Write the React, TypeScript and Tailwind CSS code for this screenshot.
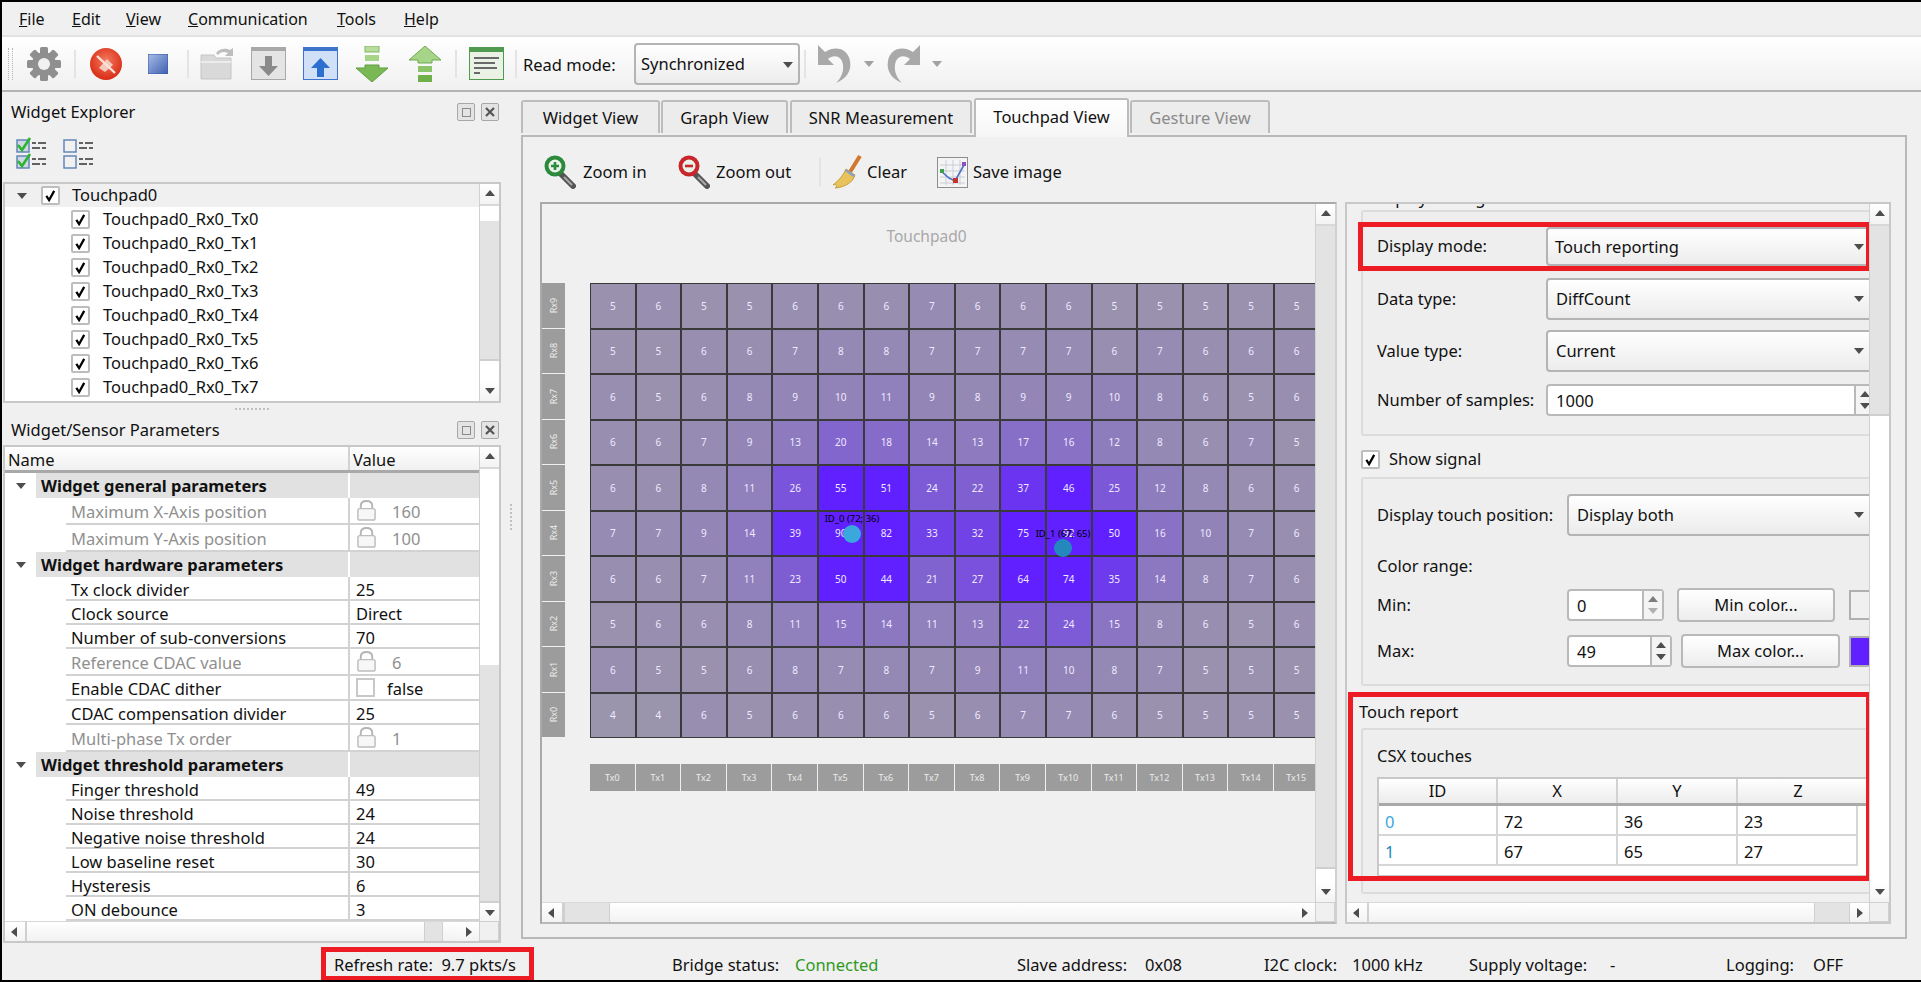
import type { ReactNode } from 'react';

const gridValues = [
  [5, 6, 5, 5, 6, 6, 6, 7, 6, 6, 6, 5, 5, 5, 5, 5],
  [5, 5, 6, 6, 7, 8, 8, 7, 7, 7, 7, 6, 7, 6, 6, 6],
  [6, 5, 6, 8, 9, 10, 11, 9, 8, 9, 9, 10, 8, 6, 5, 6],
  [6, 6, 7, 9, 13, 20, 18, 14, 13, 17, 16, 12, 8, 6, 7, 5],
  [6, 6, 8, 11, 26, 55, 51, 24, 22, 37, 46, 25, 12, 8, 6, 6],
  [7, 7, 9, 14, 39, 90, 82, 33, 32, 75, 92, 50, 16, 10, 7, 6],
  [6, 6, 7, 11, 23, 50, 44, 21, 27, 64, 74, 35, 14, 8, 7, 6],
  [5, 6, 6, 8, 11, 15, 14, 11, 13, 22, 24, 15, 8, 6, 5, 6],
  [6, 5, 5, 6, 8, 7, 8, 7, 9, 11, 10, 8, 7, 5, 5, 5],
  [4, 4, 6, 5, 6, 6, 6, 5, 6, 7, 7, 6, 5, 5, 5, 5],
];

function cellColor(v: number) {
  const t = Math.min(Math.max(v - 4, 0) / 40, 1);
  const r = Math.round(154 + (96 - 154) * t);
  const g = Math.round(148 + (32 - 148) * t);
  const b = Math.round(172 + (255 - 172) * t);
  return `rgb(${r},${g},${b})`;
}

function Check({ className = 'w-[13px] h-[13px]' }: { className?: string }) {
  return (
    <svg viewBox="0 0 14 14" className={className}>
      <path d="M2.5 7.5 L5.5 12 L11 2" fill="none" stroke="#000" strokeWidth="2.4" />
    </svg>
  );
}

function CheckBox({ checked = true }: { checked?: boolean }) {
  return (
    <span className="w-[19px] h-[19px] shrink-0 bg-white border-2 border-[#bdbdbd] rounded-[2px] flex items-center justify-center">
      {checked && <Check />}
    </span>
  );
}

function Tri({ dir, className = '' }: { dir: 'up' | 'down' | 'left' | 'right'; className?: string }) {
  const d = {
    up: 'M1 8 L6 2 L11 8 Z',
    down: 'M1 3 L11 3 L6 9 Z',
    left: 'M8 1 L8 11 L2 6 Z',
    right: 'M3 1 L3 11 L9 6 Z',
  }[dir];
  return (
    <svg viewBox="0 0 12 12" className={`w-[12px] h-[12px] shrink-0 ${className}`}>
      <path d={d} fill="#4d4d4d" />
    </svg>
  );
}

function ScrollArrow({ dir }: { dir: 'up' | 'down' | 'left' | 'right' }) {
  const box = dir === 'up' || dir === 'down' ? 'h-[20px] w-full' : 'w-[20px] h-full';
  return (
    <div className={`${box} shrink-0 bg-gradient-to-b from-white to-[#f3f3f3] flex items-center justify-center`}>
      <Tri dir={dir} />
    </div>
  );
}

function VScroll({ before, thumb }: { before: string; thumb: string }) {
  return (
    <div className="w-[20px] shrink-0 flex flex-col bg-white border-l border-[#d0d0d0]">
      <ScrollArrow dir="up" />
      <div className={`${before} shrink-0 bg-white border-t-2 border-[#d8d8d8]`} />
      <div className={`${thumb} shrink-0 bg-[#e3e3e3] border-b-2 border-[#cfcfcf]`} />
      <div className="flex-1 bg-white" />
      <ScrollArrow dir="down" />
    </div>
  );
}

function HScroll({ before, thumb }: { before: string; thumb: string }) {
  return (
    <div className="h-[20px] shrink-0 flex">
      <div className="flex-1 flex bg-gradient-to-b from-white to-[#f2f2f2] border-t border-[#d8d8d8] min-w-0">
        <ScrollArrow dir="left" />
        <div className={`${before} shrink-0 border-l-2 border-[#d0d0d0]`} />
        <div className={`${thumb} shrink-0 bg-[#e3e3e3] border-x border-[#cfcfcf]`} />
        <div className="flex-1" />
        <ScrollArrow dir="right" />
      </div>
      <div className="w-[20px] shrink-0 bg-[#f0f0f0] border border-[#d0d0d0]" />
    </div>
  );
}

function Sep({ className }: { className: string }) {
  return <div className={`w-[2px] h-[28px] bg-[#e4e4e4] shrink-0 ${className}`} />;
}

function Combo({ text, className, arrow = 'mr-[4px]' }: { text: string; className: string; arrow?: string }) {
  return (
    <div className={`shrink-0 flex items-center border-2 border-[#b4b4b4] rounded-[4px] bg-gradient-to-b from-white to-[#ececec] ${className}`}>
      <span className="flex-1">{text}</span>
      <Tri dir="down" className={arrow} />
    </div>
  );
}

function Spin({ text, className, dim = false }: { text: string; className: string; dim?: boolean }) {
  return (
    <div className={`shrink-0 flex items-center pl-[8px] border-2 border-[#b9b9b9] rounded-[4px] bg-white ${className}`}>
      <span className="flex-1 pt-[2px]">{text}</span>
      <div className="w-[20px] self-stretch border-l-2 border-[#b9b9b9] flex flex-col items-center justify-center bg-[#f4f4f4]">
        <Tri dir="up" className={dim ? 'opacity-70 -mb-[1px]' : '-mb-[1px]'} />
        <Tri dir="down" className={dim ? 'opacity-40' : ''} />
      </div>
    </div>
  );
}

function Btn({ text, className }: { text: string; className: string }) {
  return (
    <div className={`shrink-0 flex items-center justify-center border-2 border-[#b9b9b9] rounded-[4px] bg-gradient-to-b from-white to-[#ededed] ${className}`}>
      {text}
    </div>
  );
}

/* toolbar drawings */
function Gear() {
  const teeth = [0, 45, 90, 135, 180, 225, 270, 315];
  return (
    <svg viewBox="0 0 34 34" className="w-[34px] h-[34px] ml-[14px] shrink-0">
      {teeth.map((a) => (
        <rect key={a} x="13" y="0" width="8" height="9" rx="1.5" fill="#8f8f8f" transform={`rotate(${a} 17 17)`} />
      ))}
      <circle cx="17" cy="17" r="12" fill="#8f8f8f" />
      <circle cx="17" cy="17" r="6" fill="#f1f1f1" />
    </svg>
  );
}

function StopConn() {
  return (
    <svg viewBox="0 0 32 32" className="w-[32px] h-[32px] ml-[14px] shrink-0">
      <defs>
        <radialGradient id="rd" cx="50%" cy="40%" r="60%">
          <stop offset="0%" stopColor="#f27a5c" />
          <stop offset="100%" stopColor="#d92a14" />
        </radialGradient>
      </defs>
      <circle cx="16" cy="16" r="16" fill="url(#rd)" />
      <path d="M9 20 L17 11 L23 17 L15 24 Z" fill="#f4c9bd" />
      <path d="M7 8 L25 25" stroke="#f9e3dc" strokeWidth="2.4" />
    </svg>
  );
}

function Square() {
  return (
    <svg viewBox="0 0 20 20" className="w-[20px] h-[20px] ml-[26px] shrink-0">
      <defs>
        <linearGradient id="bl" x1="0" y1="0" x2="1" y2="1">
          <stop offset="0%" stopColor="#a9bde6" />
          <stop offset="100%" stopColor="#3d5fb0" />
        </linearGradient>
      </defs>
      <rect width="20" height="20" fill="url(#bl)" stroke="#3a5aa8" />
    </svg>
  );
}

function Folder() {
  return (
    <svg viewBox="0 0 34 33" className="w-[34px] h-[33px] ml-[11px] shrink-0">
      <path d="M1 8 L14 8 L16 11 L31 11 L31 32 L1 32 Z" fill="#d9d9d9" stroke="#c6c6c6" />
      <path d="M16 6 C20 1 26 1 30 3 L33 1 L33 9 L25 9 L28 6 C24 4 20 5 18 8 Z" fill="#bdbdbd" />
      <path d="M1 15 L31 15" stroke="#ececec" strokeWidth="2" />
    </svg>
  );
}

function WinArrow({ up, className }: { up?: boolean; className: string }) {
  const frame = up ? '#3f74cc' : '#a8a8a8';
  const fill = up ? '#cfe0f7' : '#e4e4e4';
  const arrow = up ? '#2c6fd0' : '#8a8a8a';
  return (
    <svg viewBox="0 0 35 33" className={`w-[35px] h-[33px] shrink-0 ${className}`}>
      <rect x="0.5" y="0.5" width="34" height="32" fill={fill} stroke={frame} />
      <rect x="0" y="0" width="35" height="4" fill={frame} />
      {up ? (
        <path d="M17.5 11 L27 21 L21 21 L21 30 L14 30 L14 21 L8 21 Z" fill={arrow} />
      ) : (
        <path d="M14 9 L21 9 L21 19 L27 19 L17.5 29 L8 19 L14 19 Z" fill={arrow} />
      )}
    </svg>
  );
}

function GreenArrow({ up, className }: { up?: boolean; className: string }) {
  return (
    <svg viewBox="0 0 32 36" className={`w-[32px] h-[36px] shrink-0 ${className}`}>
      {up ? (
        <>
          <path d="M16 0 L32 14 L23 14 L23 17 L9 17 L9 14 L0 14 Z" fill="#a6d488" stroke="#6da94c" />
          <rect x="9" y="20" width="14" height="6" fill="#8cc46a" />
          <rect x="9" y="29" width="14" height="7" fill="#6fb04a" />
        </>
      ) : (
        <>
          <rect x="9" y="0" width="14" height="6" fill="#b7dc9c" stroke="#84b864" />
          <rect x="9" y="9" width="14" height="6" fill="#a6d488" />
          <path d="M9 19 L23 19 L23 22 L32 22 L16 36 L0 22 L9 22 Z" fill="#7ab856" stroke="#5f9c3e" />
        </>
      )}
    </svg>
  );
}

function LogWin() {
  return (
    <svg viewBox="0 0 35 33" className="w-[35px] h-[33px] ml-[12px] shrink-0">
      <rect x="0.5" y="0.5" width="34" height="32" fill="#e9f2e4" stroke="#4f9a4f" />
      <rect width="35" height="5" fill="#4f9a4f" />
      <path d="M5 11 H30 M5 16 H26 M5 21 H28 M5 26 H11" stroke="#6a6a6a" strokeWidth="2" />
    </svg>
  );
}

function Undo({ flip, className }: { flip?: boolean; className: string }) {
  return (
    <svg viewBox="0 0 36 42" className={`w-[36px] h-[42px] shrink-0 ${className} ${flip ? '-scale-x-100' : ''}`}>
      <path d="M2 2 L2 22 L18 22 L12 16 C18 11 26 13 27 22 C28 30 24 36 20 40 C30 36 36 28 34 18 C32 6 20 2 9 9 Z" fill="#a9a9a9" />
    </svg>
  );
}

function Magnifier({ color, plus }: { color: string; plus?: boolean }) {
  return (
    <svg viewBox="0 0 32 34" className="w-[32px] h-[34px] shrink-0">
      <path d="M16 18 L29 31" stroke="#555" strokeWidth="6" strokeLinecap="round" />
      <path d="M20 22 L28 30" stroke="#aaa" strokeWidth="2" />
      <circle cx="11" cy="11" r="10.5" fill={color} />
      <circle cx="11" cy="11" r="6.5" fill="#eaf3ea" />
      {plus ? <path d="M11 7 V15 M7 11 H15" stroke={color} strokeWidth="2.6" /> : <path d="M7 11 H15" stroke={color} strokeWidth="2.6" />}
    </svg>
  );
}

function Broom() {
  return (
    <svg viewBox="0 0 30 34" className="w-[30px] h-[34px] shrink-0">
      <path d="M28 1 L18 17" stroke="#d2772e" strokeWidth="4" />
      <path d="M14 14 L23 20 C21 27 14 32 3 33 C7 30 3 29 1 30 C6 26 11 21 14 14 Z" fill="#e8c25a" stroke="#c79f3c" />
      <path d="M14 14 L23 20 L21 22 L13 16 Z" fill="#8aa2c8" />
    </svg>
  );
}

function ChartIcon() {
  return (
    <svg viewBox="0 0 31 31" className="w-[31px] h-[31px] shrink-0">
      <rect x="0.5" y="0.5" width="30" height="30" fill="#f4f4f4" stroke="#8d8d8d" />
      <path d="M3 8 H28 M3 14 H28 M3 20 H28 M3 26 H28 M9 3 V28 M16 3 V28 M23 3 V28" stroke="#c8cdd6" />
      <path d="M4 14 L12 21 L18 24 L27 8" stroke="#4a72c4" strokeWidth="1.6" fill="none" />
      <rect x="16" y="21" width="5" height="5" fill="#c8322c" />
      <rect x="25" y="5" width="4" height="4" fill="#8f4fc0" />
      <rect x="3" y="12" width="4" height="4" fill="#3aa04a" />
    </svg>
  );
}

function Lock() {
  return (
    <svg viewBox="0 0 22 22" className="w-[21px] h-[21px] shrink-0">
      <path d="M5 10 V6 C5 2 8 1 11 1 C14 1 17 2 17 6 V10" fill="none" stroke="#b5b5b5" strokeWidth="2" />
      <rect x="2" y="9" width="18" height="12" rx="2" fill="#f7f7f7" stroke="#bdbdbd" strokeWidth="1.5" />
    </svg>
  );
}

function DockButtons() {
  return (
    <div className="flex gap-[6px] ml-auto mr-[2px]">
      <span className="w-[18px] h-[18px] border border-[#a8a8a8] rounded-[2px] bg-[#e4e4e4] flex items-center justify-center">
        <span className="w-[9px] h-[9px] border border-[#8a8a8a]" />
      </span>
      <span className="w-[18px] h-[18px] border border-[#a8a8a8] rounded-[2px] bg-[#e4e4e4] flex items-center justify-center text-[#555]">
        <svg viewBox="0 0 10 10" className="w-[10px] h-[10px]">
          <path d="M1 1 L9 9 M9 1 L1 9" stroke="#555" strokeWidth="2.2" />
        </svg>
      </span>
    </div>
  );
}

function ListIcon({ checked }: { checked: boolean }) {
  const rows = [0, 16];
  return (
    <svg viewBox="0 0 32 32" className="w-[32px] h-[32px] shrink-0">
      {rows.map((y) => (
        <g key={y} transform={`translate(0 ${y})`}>
          <rect x="1" y="3" width="12" height="12" fill={checked ? '#cfd8e6' : 'none'} stroke="#5a7fb5" strokeWidth="1.4" />
          {checked && <path d="M2 8 L6 13 L14 1" fill="none" stroke="#2cb52c" strokeWidth="2.6" />}
          <path d="M16 6 H20 M22 6 H30 M16 11 H24 M26 11 H30" stroke="#333" strokeWidth="1.5" />
        </g>
      ))}
    </svg>
  );
}

function ParamGroup({ label }: { label: string }) {
  return (
    <div className="h-[25px] flex items-center">
      <div className="w-[31px] shrink-0 flex justify-center pl-[1px]">
        <Tri dir="down" />
      </div>
      <div className="w-[314px] h-full bg-[#e1e1e1] font-bold pl-[5px] pt-[2px] flex items-center border-r-2 border-white">{label}</div>
      <div className="flex-1 h-full bg-[#e1e1e1]" />
    </div>
  );
}

function ParamRow({ label, value, locked, check }: { label: string; value: string; locked?: boolean; check?: boolean }) {
  const h = locked ? 'h-[27px]' : check ? 'h-[25px]' : 'h-[24px]';
  return (
    <div className={`${h} flex pl-[61px]`}>
      <div className={`w-[284px] border-b-2 border-r-2 border-[#d2d2d2] pl-[5px] pt-[4px] flex items-center ${locked ? 'text-[#8f8f8f]' : ''}`}>{label}</div>
      <div className={`flex-1 border-b-2 border-[#d2d2d2] pl-[6px] flex items-center ${locked ? 'text-[#8f8f8f]' : ''}`}>
        {locked && <span className="mr-[15px]"><Lock /></span>}
        {check && <span className="w-[19px] h-[19px] border-2 border-[#c8c8c8] mr-[12px]" />}
        <span className="pt-[4px]">{value}</span>
      </div>
    </div>
  );
}

const RedFrame = ({ className }: { className: string }) => (
  <div className={`absolute border-[5px] border-[#ed1c24] pointer-events-none ${className}`} />
);

function GroupBox({ children, className }: { children: ReactNode; className: string }) {
  return <div className={`ml-[14px] w-[620px] border-2 border-[#dcdcdc] rounded-[3px] bg-[#eeeeee] ${className}`}>{children}</div>;
}

export default function App() {
  const tree = [0, 1, 2, 3, 4, 5, 6, 7];
  return (
    <div className="w-[1921px] h-[982px] flex flex-col bg-[#f0f0f0] text-[16.5px] leading-none text-[#111] font-['Noto_Sans',sans-serif] border-t-2 border-l-2 border-b-2 border-black overflow-hidden">
      {/* menu */}
      <div className="h-[33px] shrink-0 flex items-center pl-[17px] text-[16px]">
        <span className="w-[53px]"><span className="underline">F</span>ile</span>
        <span className="w-[54px]"><span className="underline">E</span>dit</span>
        <span className="w-[62px]"><span className="underline">V</span>iew</span>
        <span className="w-[149px]"><span className="underline">C</span>ommunication</span>
        <span className="w-[67px]"><span className="underline">T</span>ools</span>
        <span><span className="underline">H</span>elp</span>
      </div>

      {/* toolbar */}
      <div className="h-[57px] shrink-0 flex items-center border-y-2 border-t-[#e2e2e2] border-b-[#b4b4b4] bg-gradient-to-b from-white to-[#f0f0f0]">
        <div className="ml-[6px] w-[5px] h-[32px] shrink-0 border-x border-dotted border-[#b5b5b5]" />
        <Gear />
        <Sep className="ml-[13px]" />
        <StopConn />
        <Square />
        <Sep className="ml-[19px]" />
        <Folder />
        <WinArrow className="ml-[17px]" />
        <WinArrow up className="ml-[17px]" />
        <GreenArrow className="ml-[18px]" />
        <GreenArrow up className="ml-[21px]" />
        <Sep className="ml-[14px]" />
        <LogWin />
        <Sep className="ml-[11px]" />
        <span className="ml-[6px] pt-[4px] w-[111px] shrink-0">Read mode:</span>
        <Combo text="Synchronized" className="w-[166px] h-[42px] pl-[5px] pt-[2px]" />
        <Sep className="ml-[4px]" />
        <Undo className="ml-[10px]" />
        <Tri dir="down" className="ml-[11px] opacity-50" />
        <Undo flip className="ml-[11px]" />
        <Tri dir="down" className="ml-[9px] opacity-50" />
      </div>

      {/* main */}
      <div className="flex-1 min-h-0 flex">
        {/* left docks */}
        <div className="w-[499px] shrink-0 flex flex-col pl-[1px]">
          <div className="h-[40px] shrink-0 flex items-center pl-[8px]">
            Widget Explorer
            <DockButtons />
          </div>
          <div className="h-[50px] shrink-0 flex items-start gap-[15px] pl-[13px] pt-[5px]">
            <ListIcon checked />
            <ListIcon checked={false} />
          </div>
          <div className="h-[221px] shrink-0 flex border-2 border-[#c8c8c8] bg-white overflow-hidden">
            <div className="flex-1 overflow-hidden">
              <div className="h-[23px] bg-[#f0f0f0] flex items-center pl-[11px]">
                <Tri dir="down" />
                <span className="ml-[13px] mr-[12px]"><CheckBox /></span>
                Touchpad0
              </div>
              {tree.map((i) => (
                <div key={i} className="h-[24px] flex items-center pl-[66px] gap-[13px]">
                  <CheckBox />
                  Touchpad0_Rx0_Tx{i}
                </div>
              ))}
              <div className="h-[24px] flex items-center pl-[66px]">
                <CheckBox />
              </div>
            </div>
            <VScroll before="h-[17px]" thumb="h-[140px]" />
          </div>
          <div className="h-[12px] shrink-0 flex justify-center items-center">
            <div className="w-[34px] border-t-2 border-dotted border-[#c0c0c0]" />
          </div>
          <div className="h-[30px] shrink-0 flex items-center pl-[8px]">
            Widget/Sensor Parameters
            <DockButtons />
          </div>
          <div className="h-[498px] shrink-0 flex flex-col border-2 border-[#c8c8c8] bg-white">
            <div className="flex-1 flex min-h-0">
              <div className="flex-1 min-w-0 overflow-hidden">
                <div className="h-[26px] flex bg-gradient-to-b from-white to-[#f0f0f0] border-b-[3px] border-[#a9a9a9]">
                  <div className="w-[345px] pl-[3px] pt-[3px] flex items-center border-r-2 border-[#d2d2d2]">Name</div>
                  <div className="flex-1 pl-[3px] pt-[3px] flex items-center">Value</div>
                </div>
                <ParamGroup label="Widget general parameters" />
                <ParamRow locked label="Maximum X-Axis position" value="160" />
                <ParamRow locked label="Maximum Y-Axis position" value="100" />
                <ParamGroup label="Widget hardware parameters" />
                <ParamRow label="Tx clock divider" value="25" />
                <ParamRow label="Clock source" value="Direct" />
                <ParamRow label="Number of sub-conversions" value="70" />
                <ParamRow locked label="Reference CDAC value" value="6" />
                <ParamRow check label="Enable CDAC dither" value="false" />
                <ParamRow label="CDAC compensation divider" value="25" />
                <ParamRow locked label="Multi-phase Tx order" value="1" />
                <ParamGroup label="Widget threshold parameters" />
                <ParamRow label="Finger threshold" value="49" />
                <ParamRow label="Noise threshold" value="24" />
                <ParamRow label="Negative noise threshold" value="24" />
                <ParamRow label="Low baseline reset" value="30" />
                <ParamRow label="Hysteresis" value="6" />
                <ParamRow label="ON debounce" value="3" />
              </div>
              <VScroll before="h-[198px]" thumb="h-[238px]" />
            </div>
            <HScroll before="w-[399px]" thumb="w-[19px]" />
          </div>
        </div>

        {/* splitter */}
        <div className="w-[20px] shrink-0 flex flex-col items-center pt-[412px]">
          <div className="h-[26px] border-l-2 border-dotted border-[#c0c0c0]" />
        </div>

        {/* tabs */}
        <div className="flex-1 min-w-0 flex flex-col pr-[14px] pt-[8px]">
          <div className="h-[35px] shrink-0 flex items-end relative z-10">
            <div className="w-[139px] h-[33px] mb-[2px] mr-[1px] pt-[2px] bg-[#ececec] border-2 border-b-0 border-[#bcbcbc] rounded-t-[3px] flex items-center justify-center">Widget View</div>
            <div className="w-[127px] h-[33px] mb-[2px] mr-[2px] pt-[2px] bg-[#ececec] border-2 border-b-0 border-[#bcbcbc] rounded-t-[3px] flex items-center justify-center">Graph View</div>
            <div className="w-[182px] h-[33px] mb-[2px] mr-[2px] pt-[2px] bg-[#ececec] border-2 border-b-0 border-[#bcbcbc] rounded-t-[3px] flex items-center justify-center">SNR Measurement</div>
            <div className="w-[155px] h-[39px] -mb-[2px] mr-[1px] pb-[2px] bg-gradient-to-b from-white to-[#f6f6f6] border-2 border-b-0 border-[#bcbcbc] rounded-t-[3px] flex items-center justify-center">Touchpad View</div>
            <div className="w-[140px] h-[33px] mb-[2px] pt-[2px] bg-[#ececec] border-2 border-b-0 border-[#bcbcbc] rounded-t-[3px] flex items-center justify-center text-[#8b8b8b]">Gesture View</div>
          </div>
          <div className="h-[804px] shrink-0 flex flex-col border-2 border-[#b9b9b9] bg-[#f0f0f0]">
            <div className="h-[65px] shrink-0 flex items-center pl-[21px] pt-[5px]">
              <Magnifier color="#2c8a3c" plus />
              <span className="ml-[7px] w-[95px]">Zoom in</span>
              <Magnifier color="#c9252b" />
              <span className="ml-[6px] w-[103px]">Zoom out</span>
              <Sep className="mr-[11px]" />
              <Broom />
              <span className="ml-[5px] w-[70px]">Clear</span>
              <ChartIcon />
              <span className="ml-[5px]">Save image</span>
            </div>
            <div className="flex-1 min-h-0 flex pl-[17px] pb-[13px] gap-[8px]">
              {/* touchpad canvas */}
              <div className="w-[797px] shrink-0 flex flex-col border-2 border-[#a9a9a9] border-r-[#d0d0d0] border-b-[#b9b9b9] bg-[#f0f0f0]">
                <div className="flex-1 min-h-0 flex">
                  <div className="flex-1 min-w-0 relative overflow-hidden">
                    <div className="h-[79px] flex justify-center items-start pt-[25px] text-[#a8a8a8] text-[15.5px] pr-[4px]">Touchpad0</div>
                    <div className="flex">
                      <div className="w-[23px] shrink-0 flex flex-col gap-[1px]">
                        {[9, 8, 7, 6, 5, 4, 3, 2, 1, 0].map((n) => (
                          <div key={n} className="h-[44.5px] bg-[#9c9c9c] text-[#ececec] text-[9px] flex items-center justify-center">
                            <span className="-rotate-90 whitespace-nowrap">Rx{n}</span>
                          </div>
                        ))}
                      </div>
                      <div className="ml-[25px] shrink-0 w-[730px] grid grid-cols-[repeat(16,43.6px)] auto-rows-[43.5px] gap-[2px] p-[1px] bg-[#3a3a3a]">
                        {gridValues.flat().map((v, i) => (
                          <div key={i} className="flex items-center justify-center text-[10px] text-[#efeaff]" style={{ backgroundColor: cellColor(v) }}>
                            {v}
                          </div>
                        ))}
                      </div>
                    </div>
                    <div className="mt-[26px] ml-[48px] flex gap-[1px] w-[760px]">
                      {Array.from({ length: 16 }, (_, i) => (
                        <div key={i} className="w-[44.6px] shrink-0 h-[27px] bg-[#9c9c9c] text-[#ececec] text-[9px] flex items-center justify-center">
                          Tx{i}
                        </div>
                      ))}
                    </div>
                    <div className="absolute left-[282px] top-[310px] w-[56px] text-center text-[9.5px] text-black whitespace-nowrap">ID_0 (72; 36)</div>
                    <div className="absolute left-[301px] top-[321px] w-[18px] h-[18px] rounded-full bg-[#3aa8dc]" />
                    <div className="absolute left-[493px] top-[325px] w-[56px] text-center text-[9.5px] text-black whitespace-nowrap">ID_1 (67; 65)</div>
                    <div className="absolute left-[512px] top-[335px] w-[18px] h-[18px] rounded-full bg-[#2488bc]" />
                  </div>
                  <VScroll before="h-[1px]" thumb="h-[643px]" />
                </div>
                <HScroll before="w-[1px]" thumb="w-[46px]" />
              </div>

              {/* settings panel */}
              <div className="w-[546px] shrink-0 flex flex-col border-2 border-[#c8c8c8]">
                <div className="flex-1 min-h-0 flex">
                  <div className="flex-1 min-w-0 relative overflow-hidden">
                    <div className="h-[6px] overflow-hidden">
                      <div className="-mt-[16px] ml-[24px] h-[20px] leading-[20px] whitespace-nowrap">Display settings</div>
                    </div>
                    <GroupBox className="h-[226px] pt-[15px] pl-[14px]">
                      <div className="flex items-center h-[39px]">
                        <span className="w-[169px] shrink-0">Display mode:</span>
                        <Combo text="Touch reporting" className="w-[400px] h-[39px] pl-[7px] pt-[1px]" arrow="mr-[79px]" />
                      </div>
                      <div className="flex items-center h-[42px] mt-[12px]">
                        <span className="w-[169px] shrink-0">Data type:</span>
                        <Combo text="DiffCount" className="w-[400px] h-[42px] pl-[8px]" arrow="mr-[79px]" />
                      </div>
                      <div className="flex items-center h-[42px] mt-[10px]">
                        <span className="w-[169px] shrink-0">Value type:</span>
                        <Combo text="Current" className="w-[400px] h-[42px] pl-[8px]" arrow="mr-[79px]" />
                      </div>
                      <div className="flex items-center h-[32px] mt-[12px]">
                        <span className="w-[169px] shrink-0">Number of samples:</span>
                        <Spin text="1000" className="w-[330px] h-[32px]" />
                      </div>
                    </GroupBox>
                    <div className="h-[41px] ml-[14px] flex items-center gap-[9px] pt-[5px]">
                      <CheckBox />
                      Show signal
                    </div>
                    <GroupBox className="h-[209px] pt-[15px] pl-[14px]">
                      <div className="flex items-center h-[42px]">
                        <span className="w-[190px] shrink-0">Display touch position:</span>
                        <Combo text="Display both" className="w-[400px] h-[42px] pl-[8px]" arrow="mr-[100px]" />
                      </div>
                      <div className="h-[52px] flex items-center pt-[8px]">Color range:</div>
                      <div className="flex items-center h-[34px]">
                        <span className="w-[190px] shrink-0">Min:</span>
                        <Spin dim text="0" className="w-[97px] h-[32px]" />
                        <Btn text="Min color..." className="w-[158px] h-[34px] ml-[13px]" />
                        <div className="ml-[14px] w-[40px] h-[30px] shrink-0 border-2 border-[#b0b0b0] bg-[#f0f0f0]" />
                      </div>
                      <div className="flex items-center h-[34px] mt-[12px]">
                        <span className="w-[190px] shrink-0">Max:</span>
                        <Spin text="49" className="w-[105px] h-[32px]" />
                        <Btn text="Max color..." className="w-[159px] h-[34px] ml-[9px]" />
                        <div className="ml-[9px] w-[40px] h-[31px] shrink-0 border-2 border-[#b0b0b0] bg-[#6020ff]" />
                      </div>
                    </GroupBox>
                    <div className="h-[42px] ml-[12px] flex items-end pb-[8px]">Touch report</div>
                    <GroupBox className="h-[166px] pt-[18px] pl-[14px]">
                      <div className="h-[29px]">CSX touches</div>
                      <div className="w-[600px] h-[100px] border-2 border-[#c8c8c8] bg-white">
                        <div className="h-[27px] flex bg-gradient-to-b from-white to-[#ececec] border-b-[3px] border-[#a9a9a9]">
                          <div className="w-[119px] flex items-center justify-center border-r-2 border-[#d2d2d2]">ID</div>
                          <div className="w-[120px] flex items-center justify-center border-r-2 border-[#d2d2d2]">X</div>
                          <div className="w-[120px] flex items-center justify-center border-r-2 border-[#d2d2d2]">Y</div>
                          <div className="w-[120px] flex items-center justify-center">Z</div>
                        </div>
                        {[
                          { id: '0', c: 'text-[#3aa8dc]', v: ['72', '36', '23'] },
                          { id: '1', c: 'text-[#2488bc]', v: ['67', '65', '27'] },
                        ].map((r) => (
                          <div key={r.id} className="h-[30px] flex">
                            <div className={`w-[119px] pl-[6px] pt-[4px] flex items-center border-r-2 border-b-2 border-[#d6d6d6] ${r.c}`}>{r.id}</div>
                            {r.v.map((x) => (
                              <div key={x} className="w-[120px] pl-[6px] pt-[4px] flex items-center border-r-2 border-b-2 border-[#d6d6d6]">{x}</div>
                            ))}
                          </div>
                        ))}
                      </div>
                    </GroupBox>
                    <RedFrame className="left-[11px] top-[18px] w-[513px] h-[49px]" />
                    <RedFrame className="left-[1px] top-[488px] w-[523px] h-[189px]" />
                  </div>
                  <VScroll before="h-[1px]" thumb="h-[190px]" />
                </div>
                <HScroll before="w-[447px]" thumb="w-[36px]" />
              </div>
            </div>
          </div>
        </div>
      </div>

      {/* status bar */}
      <div className="h-[35px] shrink-0 flex items-center pt-[6px]">
        <div className="ml-[319px] w-[213px] h-[33px] -mt-[4px] pt-[3px] border-[5px] border-b-[4px] border-[#ed1c24] flex items-center pl-[8px] shrink-0">
          Refresh rate:&nbsp;&nbsp;9.7 pkts/s
        </div>
        <span className="ml-[138px] w-[123px] shrink-0">Bridge status:</span>
        <span className="w-[222px] shrink-0 text-[#2f9a1e]">Connected</span>
        <span className="w-[128px] shrink-0">Slave address:</span>
        <span className="w-[119px] shrink-0">0x08</span>
        <span className="w-[88px] shrink-0">I2C clock:</span>
        <span className="w-[117px] shrink-0">1000 kHz</span>
        <span className="w-[141px] shrink-0">Supply voltage:</span>
        <span className="w-[116px] shrink-0">-</span>
        <span className="w-[87px] shrink-0">Logging:</span>
        <span>OFF</span>
      </div>
    </div>
  );
}
